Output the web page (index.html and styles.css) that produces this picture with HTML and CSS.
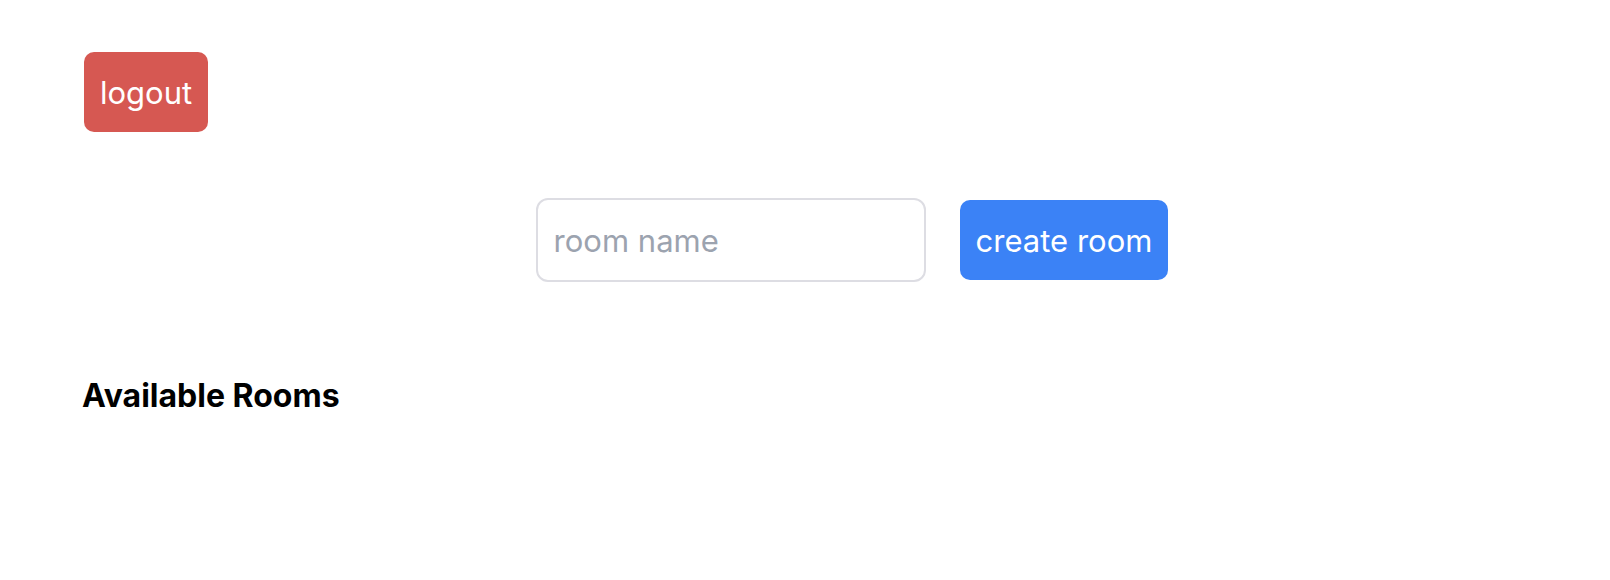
FILE: index.html
```html
<!DOCTYPE html>
<html lang="en">
<head>
<meta charset="utf-8">
<title>Rooms</title>
<link rel="stylesheet" href="styles.css">
</head>
<body>
<main class="page">
  <header class="topbar">
    <button class="button button-danger" type="button">logout</button>
  </header>
  <form class="room-form">
    <input class="room-input" type="text" placeholder="room name" aria-label="room name">
    <button class="button button-primary" type="button">create room</button>
  </form>
  <h1 class="rooms-title">Available Rooms</h1>
</main>
</body>
</html>
```

FILE: styles.css
```css
* {
  box-sizing: border-box;
}

body {
  margin: 0;
  background: #fff;
  color: #000;
  font-family: Inter, "Liberation Sans", sans-serif;
  font-size: 31px;
  line-height: 48px;
}

.page {
  padding: 52px 82px;
}

.topbar {
  display: flex;
  padding: 0 2px;
}

.button {
  padding: 17px 16px 15px;
  border: 0;
  border-radius: 10px;
  color: #fff;
  font: inherit;
}

.button-danger {
  background: #d65852;
}

.button-primary {
  background: #3b82f6;
}

.room-form {
  display: flex;
  justify-content: center;
  align-items: center;
  gap: 34px;
  margin: 66px 0 90px;
  padding-left: 94px;
}

.room-input {
  width: 390px;
  padding: 17px 16px 15px;
  border: 2px solid #dddde3;
  border-radius: 12px;
  background: #fff;
  color: #000;
  font: inherit;
}

.room-input::placeholder {
  color: #9ca3af;
  opacity: 1;
}

.rooms-title {
  margin: 0;
  font-size: 32px;
  font-weight: 700;
  line-height: 48px;
}
```
